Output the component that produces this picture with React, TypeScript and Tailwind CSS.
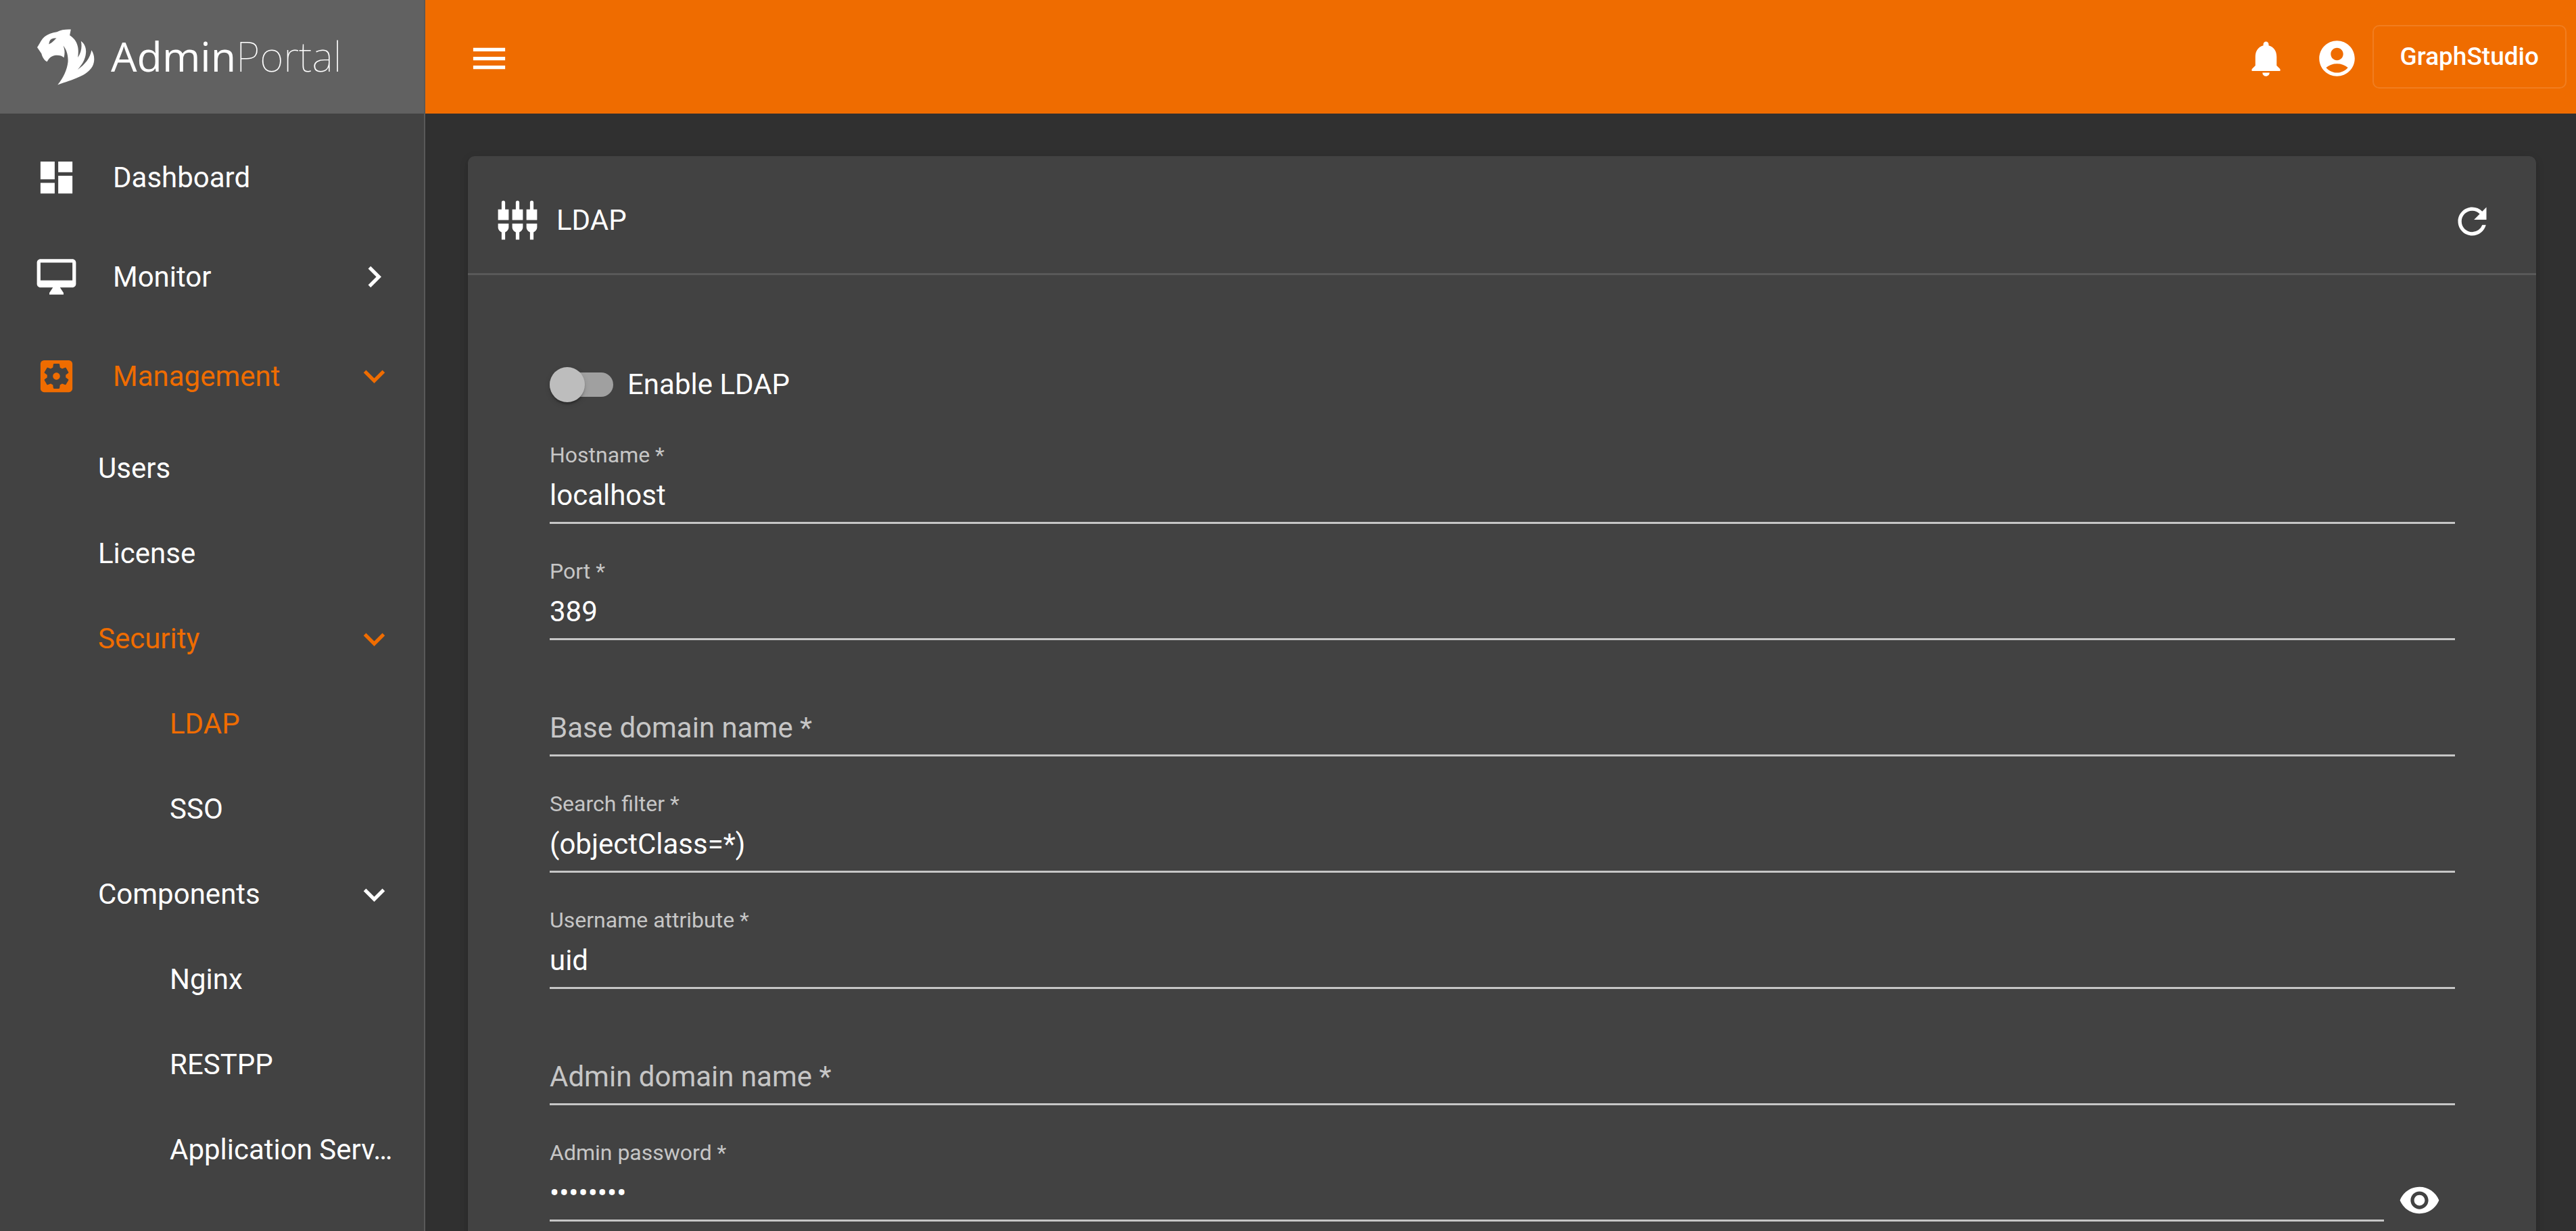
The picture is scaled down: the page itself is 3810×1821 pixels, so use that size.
import { useState } from 'react';
import type { ReactNode } from 'react';
import {
  MdAccountCircle,
  MdChevronRight,
  MdDashboard,
  MdExpandMore,
  MdMenu,
  MdNotifications,
  MdRefresh,
  MdSettingsApplications,
  MdSettingsInputComponent,
  MdVisibility,
} from 'react-icons/md';

function TigerLogo() {
  return (
    <svg viewBox="30 38 256 249" className="h-[83px] w-[85px] shrink-0" fill="currentColor" aria-hidden="true">
      <path
        fillRule="evenodd"
        d="M180 39L175 65C196 78 209 98 212 122C214 138 213 150 211 164C226 142 231 116 225 91C242 104 249 122 247 144C245 172 230 197 210 218C243 196 266 167 272 132C286 152 288 181 276 204C252 246 190 262 121 286C148 252 163 218 167 184C169 154 160 127 146 111C153 128 154 146 149 165C140 155 124 153 108 155C92 158 83 167 74 183C62 178 54 165 49 147L30 119C42 103 48 84 64 71C77 60 96 53 118 50C136 40 158 38 180 39ZM82 105C84 92 88 83 95 81C102 78 109 78 116 79C106 85 101 97 82 105Z"
      />
    </svg>
  );
}

function MonitorIcon() {
  return (
    <svg viewBox="0 0 24 24" className="size-[63px]" fill="currentColor" aria-hidden="true">
      <path d="M21 2H3c-1.1 0-2 .9-2 2v12c0 1.1.9 2 2 2h7l-2 3v1h8v-1l-2-3h7c1.1 0 2-.9 2-2V4c0-1.1-.9-2-2-2zm0 12H3V4h18v10z" />
    </svg>
  );
}

type NavLinkProps = { label: string; active?: boolean };

function TopItem({ label, icon, active, chevron }: NavLinkProps & { icon: ReactNode; chevron?: ReactNode }) {
  return (
    <button
      type="button"
      className={`flex h-[147px] w-full items-center pr-[42px] pl-[52px] text-left ${active ? 'text-[#ef6c00]' : 'text-white'}`}
    >
      <span className="text-[63px]">{icon}</span>
      <span className="ml-[52px] flex-1 truncate">{label}</span>
      <span className="text-[63px]">{chevron}</span>
    </button>
  );
}

function GroupItem({ label, active, open }: NavLinkProps & { open?: boolean }) {
  return (
    <button
      type="button"
      aria-expanded={open}
      className={`flex h-[126px] w-full items-center pr-[42px] pl-[145px] text-left ${active ? 'text-[#ef6c00]' : 'text-white'}`}
    >
      <span className="flex-1 truncate">{label}</span>
      {open && <MdExpandMore className="size-[63px]" />}
    </button>
  );
}

function SubItem({ label, active }: NavLinkProps) {
  return (
    <a
      href="#"
      className={`flex h-[126px] items-center pr-[42px] pl-[251px] whitespace-nowrap ${active ? 'text-[#ef6c00]' : 'text-white'}`}
    >
      {label}
    </a>
  );
}

function Sidebar() {
  return (
    <aside className="flex w-[629px] shrink-0 flex-col border-r-2 border-[#595959] bg-[#424242]">
      <div className="flex h-[168px] shrink-0 items-center gap-[24px] bg-[#616161] pl-[55px] text-white">
        <TigerLogo />
        <span className="text-[61px] leading-[64px]">
          <span className="font-['Open_Sans',sans-serif]">Admin</span>
          <span className="font-['Noto_Sans',sans-serif] font-thin">Portal</span>
        </span>
      </div>
      <nav className="py-[21px]">
        <TopItem label="Dashboard" icon={<MdDashboard />} />
        <TopItem label="Monitor" icon={<MonitorIcon />} chevron={<MdChevronRight />} />
        <TopItem label="Management" icon={<MdSettingsApplications />} chevron={<MdExpandMore />} active />
        <GroupItem label="Users" />
        <GroupItem label="License" />
        <GroupItem label="Security" active open />
        <SubItem label="LDAP" active />
        <SubItem label="SSO" />
        <GroupItem label="Components" open />
        <SubItem label="Nginx" />
        <SubItem label="RESTPP" />
        <SubItem label="Application Serv…" />
      </nav>
    </aside>
  );
}

function IconButton({ label, children }: { label: string; children: ReactNode }) {
  return (
    <button
      type="button"
      aria-label={label}
      className="flex size-[105px] shrink-0 items-center justify-center rounded-full text-[63px] text-white"
    >
      {children}
    </button>
  );
}

function TopBar() {
  return (
    <header className="flex h-[168px] shrink-0 items-center justify-between bg-[#ef6c00] pr-[14px] pl-[42px]">
      <div className="pt-1">
        <IconButton label="Toggle menu">
          <MdMenu />
        </IconButton>
      </div>
      <div className="flex items-center">
        <div className="flex pt-1">
          <IconButton label="Notifications">
            <MdNotifications />
          </IconButton>
          <IconButton label="Account">
            <MdAccountCircle />
          </IconButton>
        </div>
        <button
          type="button"
          className="h-[94px] rounded-[10px] border-2 border-white/12 px-[39px] text-[37px] font-medium text-white"
        >
          GraphStudio
        </button>
      </div>
    </header>
  );
}

type FieldProps = { id: string; label: string; initial?: string; type?: string };

function Field({ id, label, initial = '', type = 'text' }: FieldProps) {
  const [value, setValue] = useState(initial);
  const filled = value !== '';
  return (
    <div className="grid min-w-0 flex-1 grid-cols-1 grid-rows-[36px_66px] gap-y-[18px]">
      <label
        htmlFor={id}
        className={
          filled
            ? 'col-start-1 row-start-1 text-[32px] leading-[36px] text-[#c6c6c6]'
            : 'pointer-events-none col-start-1 row-start-2 text-[42px] leading-[48px] text-[#c6c6c6]'
        }
      >
        {label} *
      </label>
      <input
        id={id}
        type={type}
        required
        value={value}
        onChange={(e) => setValue(e.target.value)}
        className="col-start-1 row-start-2 w-full border-b-3 border-[#c6c6c6] bg-transparent pb-[15px] text-[42px] leading-[48px] text-white outline-none"
      />
    </div>
  );
}

export default function App() {
  return (
    <div className="flex h-screen overflow-hidden bg-[#303030] font-['Roboto',sans-serif] text-[42px] leading-[48px] text-white">
      <Sidebar />
      <div className="flex min-w-0 flex-1 flex-col">
        <TopBar />
        <main className="flex-1 overflow-y-auto pt-[63px] pr-[59px] pb-[63px] pl-[63px] [scrollbar-width:none]">
          <section className="rounded-[10px] bg-[#424242] shadow-[0_8px_3px_-5px_rgba(0,0,0,0.2),0_5px_5px_0_rgba(0,0,0,0.14),0_3px_13px_0_rgba(0,0,0,0.12)]">
            <div className="flex h-[176px] items-center justify-between border-b-3 border-[#595959] px-[42px] pt-[16px]">
              <div className="flex items-center gap-[26px]">
                <MdSettingsInputComponent className="size-[63px]" />
                <h1>LDAP</h1>
              </div>
              <div className="pt-1">
                <IconButton label="Refresh">
                  <MdRefresh />
                </IconButton>
              </div>
            </div>
            <form className="pt-[136px] pr-[120px] pb-[120px] pl-[121px]">
              <label className="flex w-fit items-center gap-[21px]">
                <input
                  type="checkbox"
                  role="switch"
                  className="flex h-[36px] w-[94px] appearance-none items-center rounded-full bg-[#a0a0a0] before:size-[52px] before:shrink-0 before:rounded-full before:bg-[#bdbdbd] before:shadow-[0_5px_3px_-3px_rgba(0,0,0,0.2),0_3px_3px_0_rgba(0,0,0,0.14),0_3px_8px_0_rgba(0,0,0,0.12)] before:content-[''] checked:justify-end checked:before:bg-[#ef6c00]"
                />
                <span className="leading-[52px]">Enable LDAP</span>
              </label>
              <div className="mt-[60px] flex flex-col gap-[52px]">
                <Field id="hostname" label="Hostname" initial="localhost" />
                <Field id="port" label="Port" initial="389" />
                <Field id="base-domain" label="Base domain name" />
                <Field id="search-filter" label="Search filter" initial="(objectClass=*)" />
                <Field id="username-attribute" label="Username attribute" initial="uid" />
                <Field id="admin-domain" label="Admin domain name" />
                <div className="flex items-start">
                  <Field id="admin-password" label="Admin password" initial="password" type="password" />
                  <div className="pt-[36px]">
                    <IconButton label="Show password">
                      <MdVisibility />
                    </IconButton>
                  </div>
                </div>
              </div>
            </form>
          </section>
        </main>
      </div>
    </div>
  );
}
